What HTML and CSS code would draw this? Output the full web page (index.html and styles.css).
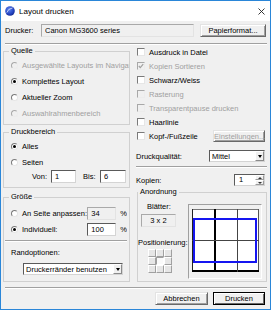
FILE: index.html
```html
<!DOCTYPE html>
<html lang="de">
<head>
    <meta charset="UTF-8">
    <meta name="viewport" content="width=device-width, initial-scale=1.0">
    <title>Layout drucken</title>
    <link rel="stylesheet" href="styles.css">
</head>
<body>
    <div class="window">
        <div class="titlebar">
            <svg class="app-icon" width="10" height="10" viewBox="0 0 10 10">
                <defs>
                    <radialGradient id="orb" cx="0.4" cy="0.35" r="0.75">
                        <stop offset="0" stop-color="#5f86ee"/>
                        <stop offset="0.6" stop-color="#2546c4"/>
                        <stop offset="1" stop-color="#0d1f80"/>
                    </radialGradient>
                </defs>
                <circle cx="5" cy="5" r="4.8" fill="url(#orb)"/>
                <path d="M1.8 6.6 Q3 2.6 7.6 1.9" stroke="#fff" stroke-width="0.8" fill="none" opacity="0.85"/>
            </svg>
            <span class="title">Layout drucken</span>
            <svg class="close" width="7" height="7" viewBox="0 0 7 7">
                <path d="M0.5 0.5L6.5 6.5M6.5 0.5L0.5 6.5" stroke="#222" stroke-width="0.9"/>
            </svg>
        </div>

        <div class="content">
            <div class="printer-row">
                <span class="printer-label">Drucker:</span>
                <input class="field readonly printer-field" type="text" value="Canon MG3600 series" readonly>
                <button class="btn paper-btn">Papierformat...</button>
            </div>
            <div class="sep"></div>

            <div class="columns">
                <div class="col-left">
                    <fieldset class="group quelle">
                        <legend>Quelle</legend>
                        <div class="opt disabled"><span class="radio"></span>Ausgewählte Layouts im Navigator</div>
                        <div class="opt"><span class="radio checked"></span>Komplettes Layout</div>
                        <div class="opt"><span class="radio"></span>Aktueller Zoom</div>
                        <div class="opt disabled"><span class="radio"></span>Auswahlrahmenbereich</div>
                    </fieldset>

                    <fieldset class="group bereich">
                        <legend>Druckbereich</legend>
                        <div class="opt"><span class="radio checked"></span>Alles</div>
                        <div class="opt"><span class="radio"></span>Seiten</div>
                        <div class="range-row">
                            <span class="von">Von:</span>
                            <input class="field num" type="text" value="1">
                            <span class="bis">Bis:</span>
                            <input class="field num wide" type="text" value="6">
                        </div>
                    </fieldset>

                    <fieldset class="group groesse">
                        <legend>Größe</legend>
                        <div class="opt">
                            <span class="radio"></span>
                            <span class="size-label">An Seite anpassen:</span>
                            <input class="field readonly pct" type="text" value="34" readonly>
                            <span class="unit">%</span>
                        </div>
                        <div class="opt">
                            <span class="radio checked"></span>
                            <span class="size-label">Individuell:</span>
                            <input class="field pct" type="text" value="100">
                            <span class="unit">%</span>
                        </div>
                        <div class="sep inner-sep"></div>
                        <div class="rand-label">Randoptionen:</div>
                        <div class="select rand-select">
                            <span class="select-text">Druckerränder benutzen</span>
                            <span class="dd-arrow"></span>
                        </div>
                    </fieldset>
                </div>

                <div class="col-right">
                    <div class="check-row"><span class="checkbox"></span>Ausdruck in Datei</div>
                    <div class="check-row disabled">
                        <span class="checkbox">
                            <svg width="6" height="6" viewBox="0 0 6 6"><polyline points="0.8,3 2.3,4.6 5.2,1.2" fill="none" stroke="#a0a0a0" stroke-width="1.2"/></svg>
                        </span>Kopien Sortieren
                    </div>
                    <div class="check-row"><span class="checkbox"></span>Schwarz/Weiss</div>
                    <div class="check-row disabled"><span class="checkbox"></span>Rasterung</div>
                    <div class="check-row disabled"><span class="checkbox"></span>Transparentpause drucken</div>
                    <div class="check-row"><span class="checkbox"></span>Haarlinie</div>
                    <div class="check-row">
                        <span class="checkbox"></span>Kopf-/Fußzeile
                        <button class="btn settings-btn" disabled>Einstellungen...</button>
                    </div>

                    <div class="quality-row">
                        <span>Druckqualität:</span>
                        <div class="select quality-select">
                            <span class="select-text">Mittel</span>
                            <span class="dd-arrow"></span>
                        </div>
                    </div>
                    <div class="sep right-sep"></div>

                    <div class="copies-row">
                        <span>Kopien:</span>
                        <div class="spin">
                            <span class="spin-value">1</span>
                            <span class="spin-btns"><span class="up"></span><span class="down"></span></span>
                        </div>
                    </div>

                    <fieldset class="group anordnung">
                        <legend>Anordnung</legend>
                        <div class="arrange">
                            <div class="arrange-left">
                                <span class="blatt-label">Blätter:</span>
                                <div class="blatt-box">3 x 2</div>
                                <span class="pos-label">Positionierung:</span>
                                <div class="pos-grid">
                                    <span></span><span></span><span></span>
                                    <span></span><span class="active"></span><span></span>
                                    <span></span><span></span><span></span>
                                </div>
                            </div>
                            <div class="preview">
                                <svg width="72" height="73" viewBox="0 0 72 73">
                                    <rect x="3" y="4" width="67" height="63" fill="#fff"/>
                                    <line x1="3" y1="4.5" x2="70" y2="4.5" stroke="#777"/>
                                    <line x1="69.5" y1="4" x2="69.5" y2="67" stroke="#555"/>
                                    <line x1="3.5" y1="4" x2="3.5" y2="67" stroke="#222"/>
                                    <line x1="3" y1="66" x2="70" y2="66" stroke="#000" stroke-width="2"/>
                                    <line x1="26" y1="4" x2="26" y2="67" stroke="#000" stroke-width="2"/>
                                    <line x1="48.5" y1="4" x2="48.5" y2="67" stroke="#444"/>
                                    <line x1="3" y1="35.5" x2="70" y2="35.5" stroke="#444"/>
                                    <rect x="5" y="14" width="62" height="43" fill="none" stroke="#1515f0" stroke-width="2"/>
                                </svg>
                            </div>
                        </div>
                    </fieldset>
                </div>
            </div>

            <div class="sep bottom-sep"></div>
            <div class="buttons">
                <button class="btn cancel-btn">Abbrechen</button>
                <button class="btn default-btn">Drucken</button>
            </div>
        </div>
    </div>
</body>
</html>
```

FILE: styles.css
```css
* {
    box-sizing: border-box;
}

body {
    margin: 0;
    font-family: "Liberation Sans", Arial, sans-serif;
    font-size: 7.5px;
    color: #000;
    background: #fff;
}

.window {
    width: 271px;
    height: 310px;
    border: 1px solid #2a86d8;
    background: #f0f0f0;
    overflow: hidden;
}

/* title bar */
.titlebar {
    height: 20px;
    background: #fff;
    display: flex;
    align-items: center;
    padding: 0 4px;
}

.app-icon {
    flex: none;
}

.title {
    margin-left: 4px;
    font-size: 8px;
}

.close {
    margin-left: auto;
    margin-right: 1px;
}

.content {
    padding: 2px 3px 0 2px;
}

/* printer row */
.printer-row {
    display: flex;
    align-items: center;
    height: 14px;
}

.printer-label {
    width: 36px;
    margin-left: 2px;
}

.printer-field {
    width: 153px;
}

.paper-btn {
    width: 66px;
    margin-left: 6px;
}

/* controls */
.field {
    height: 13px;
    margin: 0;
    padding: 0 3px;
    font: inherit;
    color: #000;
    background: #fff;
    border: 1px solid;
    border-color: #5a5a5a #d4d4d4 #d4d4d4 #5a5a5a;
    outline: none;
}

.field.readonly {
    background: #f0f0f0;
    border-color: #a9a9a9 #e3e3e3 #e3e3e3 #a9a9a9;
}

.btn {
    height: 13px;
    padding: 0;
    font: inherit;
    color: #000;
    background: #f0f0f0;
    border: 1px solid;
    border-color: #e3e3e3 #696969 #696969 #e3e3e3;
    box-shadow: inset 1px 1px #fff, inset -1px -1px #a0a0a0;
}

.btn:disabled {
    color: #a0a0a0;
}

.sep {
    height: 2px;
    margin: 6px 0 0 2px;
    border-top: 1px solid #a0a0a0;
    border-bottom: 1px solid #fff;
}

.columns {
    display: grid;
    grid-template-columns: 127px 131px;
    column-gap: 6px;
}

/* group boxes */
.group {
    margin: 0;
    min-width: 0;
    padding: 2px 2px 3px 7px;
    border: 1px solid #d0d0d0;
}

.group legend {
    padding: 0 2px;
    margin-left: -2px;
    line-height: 8px;
}

.quelle {
    margin-top: 2px;
    padding-right: 0;
}

.bereich {
    margin-top: 3px;
    padding-bottom: 4px;
}

.groesse {
    margin-top: 5px;
    padding-top: 4px;
    padding-bottom: 6px;
}

.opt {
    display: flex;
    align-items: center;
    height: 16px;
    white-space: nowrap;
    overflow: hidden;
}

.opt.disabled {
    color: #a0a0a0;
}

.radio {
    flex: none;
    width: 7px;
    height: 7px;
    margin-right: 4px;
    border-radius: 50%;
    border: 1px solid;
    border-color: #7a7a7a #e6e6e6 #e6e6e6 #7a7a7a;
    background: #fff;
    display: flex;
    align-items: center;
    justify-content: center;
}

.opt.disabled .radio {
    background: #f0f0f0;
    border-color: #a8a8a8 #ececec #ececec #a8a8a8;
}

.radio.checked::after {
    content: "";
    width: 3px;
    height: 3px;
    border-radius: 50%;
    background: #000;
}

.range-row {
    display: flex;
    align-items: center;
    height: 13px;
}

.von {
    width: 19px;
    margin-left: 21px;
}

.bis {
    width: 17px;
    margin-left: 7px;
}

.num {
    width: 25px;
}

.num.wide {
    width: 26px;
}

.size-label {
    width: 67px;
}

.pct {
    width: 29px;
}

.unit {
    margin-left: 4px;
}

.inner-sep {
    margin: 3px 0 0 -6px;
}

.rand-label {
    margin-top: 6px;
    line-height: 9px;
}

.select {
    display: flex;
    align-items: center;
    height: 12px;
    background: #fff;
    border: 1px solid;
    border-color: #5a5a5a #d4d4d4 #d4d4d4 #5a5a5a;
    white-space: nowrap;
    overflow: hidden;
}

.select-text {
    flex: 1;
    padding-left: 2px;
}

.dd-arrow {
    width: 9px;
    height: 10px;
    background: #f0f0f0;
    border: 1px solid;
    border-color: #fff #8a8a8a #8a8a8a #fff;
    display: flex;
    align-items: center;
    justify-content: center;
}

.dd-arrow::after {
    content: "";
    border-left: 2.5px solid transparent;
    border-right: 2.5px solid transparent;
    border-top: 3px solid #000;
}

.rand-select {
    width: 100px;
    margin: 6px 0 0 12px;
}

/* right column */
.check-row {
    display: flex;
    align-items: center;
    height: 14px;
    margin-left: 1px;
    white-space: nowrap;
}

.check-row.disabled {
    color: #a0a0a0;
}

.checkbox {
    flex: none;
    width: 8px;
    height: 8px;
    margin-right: 4px;
    border: 1px solid;
    border-color: #7a7a7a #e6e6e6 #e6e6e6 #7a7a7a;
    background: #fff;
    display: flex;
    align-items: center;
    justify-content: center;
}

.check-row.disabled .checkbox {
    background: #f0f0f0;
    border-color: #a8a8a8 #ececec #ececec #a8a8a8;
}

.settings-btn {
    width: 52px;
    height: 12px;
    margin-left: auto;
    margin-right: 2px;
}

.quality-row {
    display: flex;
    align-items: center;
    height: 12px;
    margin-top: 7px;
}

.quality-select {
    width: 56px;
    margin-left: auto;
    margin-right: 2px;
}

.right-sep {
    margin: 4px 0 0 0;
}

.copies-row {
    display: flex;
    align-items: center;
    height: 12px;
    margin-top: 6px;
}

.spin {
    display: flex;
    width: 31px;
    height: 12px;
    margin-left: auto;
    margin-right: 2px;
    background: #fff;
    border: 1px solid;
    border-color: #5a5a5a #d4d4d4 #d4d4d4 #5a5a5a;
}

.spin-value {
    flex: 1;
    padding-left: 4px;
    line-height: 10px;
}

.spin-btns {
    width: 9px;
    display: flex;
    flex-direction: column;
}

.spin-btns span {
    flex: 1;
    background: #f0f0f0;
    border: 1px solid;
    border-color: #fff #9a9a9a #9a9a9a #fff;
    display: flex;
    align-items: center;
    justify-content: center;
}

.spin-btns .up::after {
    content: "";
    border-left: 2px solid transparent;
    border-right: 2px solid transparent;
    border-bottom: 2px solid #333;
}

.spin-btns .down::after {
    content: "";
    border-left: 2px solid transparent;
    border-right: 2px solid transparent;
    border-top: 2px solid #333;
}

.anordnung {
    margin: 2px 0 0 1px;
    padding: 6px 3px 2px 0;
}

.anordnung legend {
    margin-left: 0;
}

.arrange {
    display: flex;
}

.arrange-left {
    width: 50px;
    display: flex;
    flex-direction: column;
    align-items: flex-start;
}

.blatt-label {
    margin-left: 9px;
    line-height: 9px;
}

.blatt-box {
    width: 35px;
    height: 13px;
    margin: 3px 0 0 3px;
    background: #f0f0f0;
    border: 1px solid;
    border-color: #a9a9a9 #e3e3e3 #e3e3e3 #a9a9a9;
    display: flex;
    align-items: center;
    justify-content: center;
}

.pos-label {
    margin-top: 11px;
    line-height: 9px;
    white-space: nowrap;
}

.pos-grid {
    display: grid;
    grid-template-columns: repeat(3, 8px);
    grid-template-rows: repeat(3, 8px);
    margin: 2px 0 0 10px;
}

.pos-grid span {
    background: #e6e6e6;
    border: 1px solid;
    border-color: #fff #a0a0a0 #a0a0a0 #fff;
}

.pos-grid span.active {
    background: #fafafa;
    border-color: #a0a0a0 #fff #fff #a0a0a0;
}

.preview {
    flex: none;
    width: 74px;
    height: 75px;
    margin-top: 2px;
    background: #f0f0f0;
    border: 1px solid;
    border-color: #a0a0a0 #fff #fff #a0a0a0;
}

.preview svg {
    display: block;
}

/* bottom buttons */
.bottom-sep {
    margin-top: 5px;
}

.buttons {
    display: flex;
    justify-content: flex-end;
    gap: 5px;
    margin: 3px 2px 0 0;
}

.cancel-btn {
    width: 53px;
}

.default-btn {
    width: 52px;
    border-color: #000;
    box-shadow: inset 1px 1px #fff, inset -1px -1px #696969;
}
```
